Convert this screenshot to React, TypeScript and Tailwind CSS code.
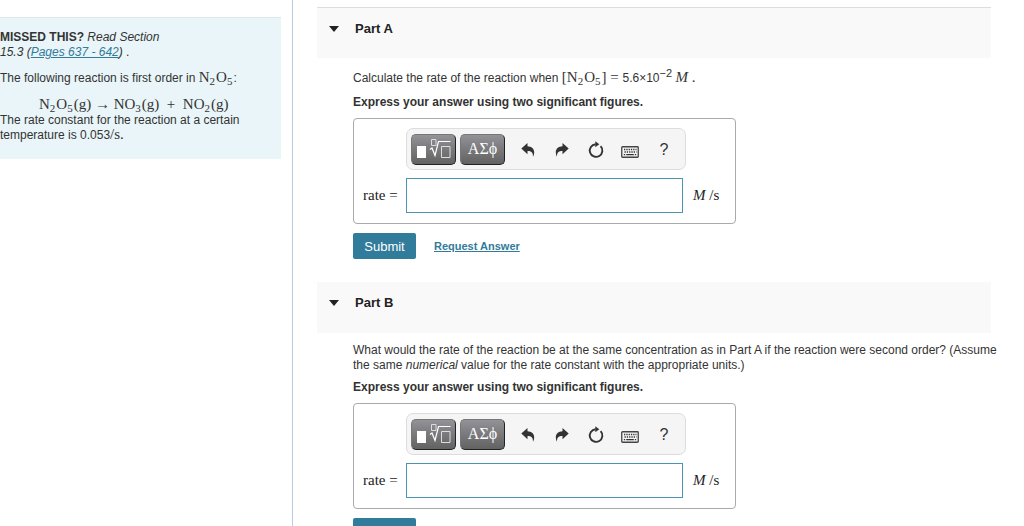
import type { ReactNode } from 'react'

interface PartProps {
  id: string
  title: string
  bordered?: boolean
  question: ReactNode
}

const Formula = ({ children }: { children: ReactNode }) => (
  <span className="font-['Liberation_Serif',serif] text-[15px] leading-[0]">{children}</span>
)

const Sub = ({ children }: { children: ReactNode }) => (
  <sub className="mr-px text-[11px]">{children}</sub>
)

const N2O5 = () => (
  <>
    N<Sub>2</Sub>O<Sub>5</Sub>
  </>
)

const UndoArrow = ({ className = '' }: { className?: string }) => (
  <svg width="14" height="14" viewBox="0 0 14 14" className={className} aria-hidden="true">
    <path d="M6.500 0v3.200c4 .2 6.700 2.400 6.700 6.200 0 1.600-.4 2.900-1.200 4.300.1-4-1.500-5.500-5.500-5.600v3.200L.3 5.600z" fill="#333" />
  </svg>
)

const ResetIcon = () => (
  <svg width="16" height="18" viewBox="0 0 16 18" aria-hidden="true">
    <path d="M12.600 5.200A6.300 6.300 0 1 1 7.600 3.300" fill="none" stroke="#333" strokeWidth="1.900" />
    <path d="M7.300 .3l4 3-4 3z" fill="#333" />
  </svg>
)

const KeyboardIcon = () => (
  <svg width="18" height="12" viewBox="0 0 18 12" aria-hidden="true">
    <rect x=".75" y=".75" width="16.500" height="10.500" rx=".8" fill="#f5f5f5" stroke="#444" strokeWidth="1.300" />
    <path d="M3 3.500h12.500M3.500 6h12" stroke="#333" strokeWidth="1.300" strokeDasharray="1.300 1" />
    <path d="M2.800 8.700h1.400M5.200 8.700h7.600M13.800 8.700h1.400" stroke="#333" strokeWidth="1.300" />
  </svg>
)

const TemplateIcon = () => (
  <svg width="35" height="20" viewBox="0 0 35 20" aria-hidden="true">
    <path d="M1 7h9v12H1z" fill="#fff" />
    <path d="M15.500 .5h4.500v6h-4.500z" fill="none" stroke="#ddd" />
    <path d="M14 10.500l2-1.500 3 7.500 3.500-14h12" fill="none" stroke="#fff" strokeWidth="1.200" />
    <path d="M25.500 7.500h8.500v11h-8.500z" fill="none" stroke="#ddd" />
  </svg>
)

const padButton =
  'flex h-[31px] w-[45px] items-center justify-center rounded-[5px] border border-[#777] border-r-[#222] border-b-[#222] bg-linear-to-b from-[#929298] to-[#626262] text-white'
const iconButton = 'flex h-6 w-[18px] items-center justify-center'

function Toolbar() {
  return (
    <div className="flex h-[42px] w-[280px] items-center rounded-[7px] border border-[#ddd] bg-[#f5f5f5] pl-1">
      <div className="flex gap-1">
        <button type="button" aria-label="Templates" className={padButton}>
          <TemplateIcon />
        </button>
        <button type="button" aria-label="Symbols" className={`${padButton} font-['Liberation_Serif',serif] text-base`}>
          ΑΣϕ
        </button>
      </div>
      <div className="mt-0.5 ml-[14px] flex gap-4 text-[#333]">
        <button type="button" aria-label="Undo" className={iconButton}>
          <UndoArrow />
        </button>
        <button type="button" aria-label="Redo" className={iconButton}>
          <UndoArrow className="-scale-x-100" />
        </button>
        <button type="button" aria-label="Reset" className={iconButton}>
          <ResetIcon />
        </button>
        <button type="button" aria-label="Keyboard shortcuts" className={`${iconButton} pt-1`}>
          <KeyboardIcon />
        </button>
        <button type="button" aria-label="Help" className={`${iconButton} text-base`}>
          ?
        </button>
      </div>
    </div>
  )
}

function AnswerBox({ id }: { id: string }) {
  return (
    <div className="mt-2 w-[383px] rounded-[4px] border border-[#aaa] pt-[9px] pb-[10px] pl-[9px]">
      <div className="pl-[43px]">
        <Toolbar />
      </div>
      <div className="mt-2 flex items-center font-['Liberation_Serif',serif] text-[15px] text-[#222]">
        <label htmlFor={id} className="w-[43px]">
          rate =
        </label>
        <input
          id={id}
          type="text"
          className="h-[35px] w-[277px] border border-[#4b95b0] bg-white px-2 outline-none"
        />
        <span className="ml-[10px]">
          <i>M</i> /s
        </span>
      </div>
    </div>
  )
}

function Part({ id, title, bordered = false, question }: PartProps) {
  return (
    <section className="mb-[23px]">
      <h2
        className={`mr-[9px] flex h-[51px] items-start bg-[#f9f9f9] pt-3 pl-3 text-[13px] leading-[18px] font-bold text-[#222] ${
          bordered ? 'border-t border-[#ddd]' : ''
        }`}
      >
        <button type="button" className="flex items-center gap-4">
          <svg width="10" height="6" viewBox="0 0 10 6" aria-hidden="true">
            <path d="M0 0h10L5 6z" fill="#222" />
          </svg>
          {title}
        </button>
      </h2>
      <div className="pt-[10px] pl-9">
        {question}
        <p className="mt-[7px] font-bold">Express your answer using two significant figures.</p>
        <AnswerBox id={id} />
        <div className="mt-[9px] flex items-center gap-[18px]">
          <button type="button" className="h-[26px] w-[63px] rounded-[2px] bg-[#317b9b] text-[13px] text-white">
            Submit
          </button>
          <a href="#" className="text-[11px] font-bold text-[#317b9b] underline">
            Request Answer
          </a>
        </div>
      </div>
    </section>
  )
}

export default function App() {
  return (
    <div className="flex h-screen overflow-hidden bg-white font-['Liberation_Sans',Arial,sans-serif] text-xs leading-[15px] text-[#333]">
      <aside className="w-[293px] shrink-0 border-r border-[#bccbdd] pt-[17px] pr-[11px]">
        <div className="border-t border-[#dfe8ea] bg-[#e9f5f8] pt-3 pb-4">
          <p>
            <b>MISSED THIS?</b> <i>Read Section</i>
            <br />
            <i>
              15.3 (
              <a href="#" className="text-[#317b9b] underline">
                Pages 637 - 642
              </a>
              )
            </i>{' '}
            .
          </p>
          <p className="mt-2 leading-5">
            The following reaction is first order in{' '}
            <Formula>
              <N2O5 />
            </Formula>
            :
          </p>
          <p className="mt-[9px] pl-[39px] leading-4">
            <Formula>
              <N2O5 />
              (g) → NO<Sub>3</Sub>(g) &nbsp;+ &nbsp;NO<Sub>2</Sub>(g)
            </Formula>
          </p>
          <p>
            The rate constant for the reaction at a certain
            <br />
            temperature is 0.053
            <Formula>/s.</Formula>
          </p>
        </div>
      </aside>

      <main className="min-w-0 flex-1 pt-[7px] pr-6 pl-6">
        <Part
          id="rate-a"
          title="Part A"
          bordered
          question={
            <p className="leading-5">
              Calculate the rate of the reaction when{' '}
              <Formula>
                [<N2O5 />] ={' '}
              </Formula>
              5.6×10<sup className="text-[11px]">−2</sup>{' '}
              <Formula>
                <i>M</i> .
              </Formula>
            </p>
          }
        />
        <Part
          id="rate-b"
          title="Part B"
          question={
            <p>
              What would the rate of the reaction be at the same concentration as in Part A if the reaction were second
              order? (Assume the same <i>numerical</i> value for the rate constant with the appropriate units.)
            </p>
          }
        />
      </main>
    </div>
  )
}
